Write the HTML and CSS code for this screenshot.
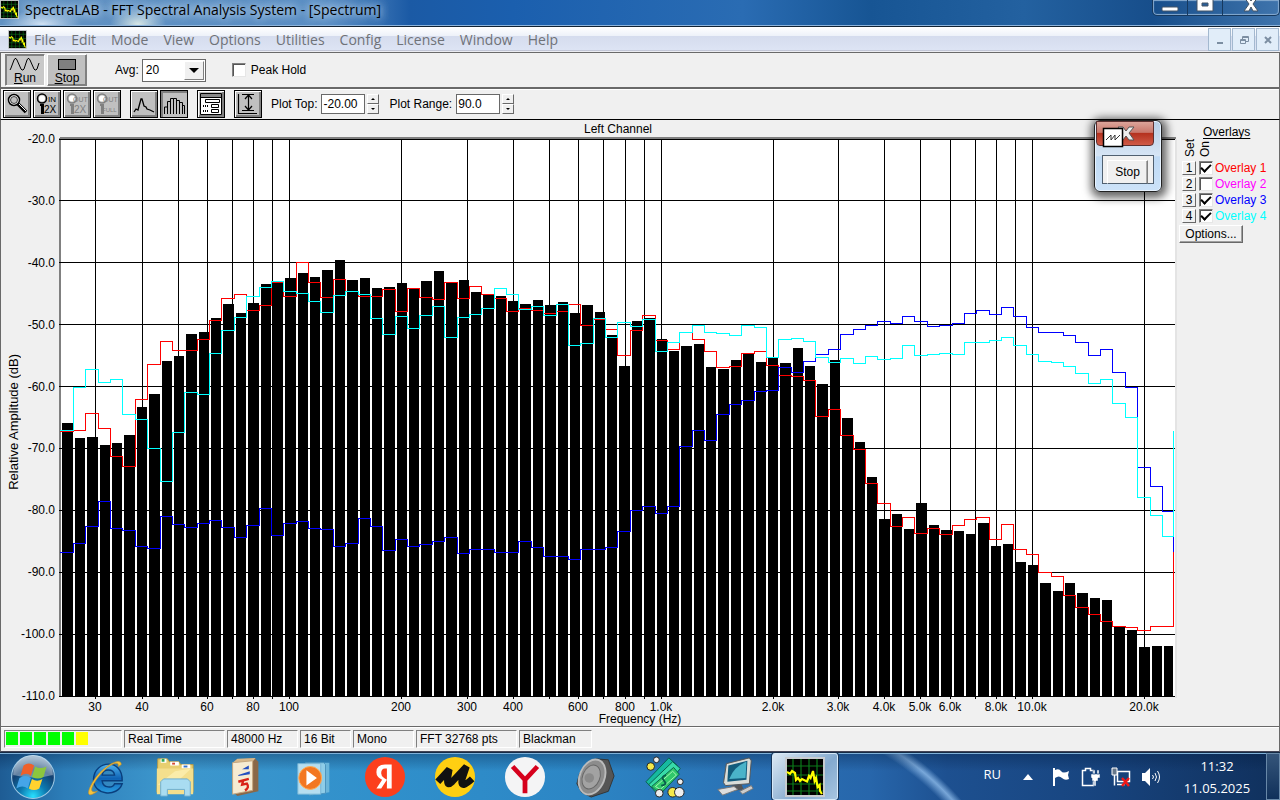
FILE: index.html
```html
<!DOCTYPE html>
<html lang="en">
<head>
<meta charset="utf-8">
<title>SpectraLAB - FFT Spectral Analysis System - [Spectrum]</title>
<link rel="stylesheet" href="styles.css">
</head>
<body>
<svg class="defs" aria-hidden="true">
  <symbol id="app" viewBox="0 0 20 20">
    <rect width="20" height="20" fill="#c8ccd0"/><rect x="1" y="1" width="18" height="18" fill="#000"/>
    <path d="M4 1v18M8 1v18M12 1v18M16 1v18M1 4.500h18M1 9h18M1 13.500h18M1 17h18" stroke="#0a7a1a" stroke-width=".6"/>
    <path d="M1 7.400l1.500 1L3.500 7 5 8l.5 3.500 1-1L7.500 12l1-1 2.500 1.200 1-2.700.8 1L14 7l.8 5 .7-1.500.8 4.500 1-1 .2 3 1 1.500" fill="none" stroke="#ff0" stroke-width="1.100"/>
  </symbol>
  <symbol id="key" viewBox="0 0 24 24">
    <circle cx="7" cy="6.500" r="4.500" fill="none" stroke="currentColor" stroke-width="1.500"/><circle cx="7" cy="6.500" r="3" fill="#fff"/><path d="M5 12h4v10H6v-8H5z" fill="currentColor"/>
  </symbol>
</svg>

<header class="titlebar">
  <svg class="app-icon"><use href="#app"/></svg>
  <h1>SpectraLAB - FFT Spectral Analysis System - [Spectrum]</h1>
  <div class="win-buttons">
    <button aria-label="Minimize"><svg width="20" height="15"><rect x="2" y="7" width="16" height="4" rx="1" fill="#fff" stroke="#456"/></svg></button>
    <button aria-label="Maximize"><svg width="20" height="15"><path d="M2-2h16v13H2zM7 3v3h6V3z" fill="#fff" fill-rule="evenodd" stroke="#456"/></svg></button>
    <button aria-label="Close"><svg width="20" height="15"><path d="M3-3h4l3 4 3-4h4l-5 7 5 7h-5l-2-4-2 4H3l5-7z" fill="#fff" stroke="#456"/></svg></button>
  </div>
</header>

<nav class="menubar">
  <svg class="menu-icon"><use href="#app"/></svg>
  <button>File</button><button>Edit</button><button>Mode</button><button>View</button><button>Options</button><button>Utilities</button><button>Config</button><button>License</button><button>Window</button><button>Help</button>
  <div class="mdi">
    <button aria-label="Minimize child"><svg width="12" height="12"><path d="M3 8h6v2H3z" fill="#7c8ea2"/></svg></button>
    <button aria-label="Restore child"><svg width="12" height="12"><path d="M4.500 5V2.500h6v5H8M2.500 5.500h5v4h-5zM4 3.500h6M2 6.500h6" fill="none" stroke="#7c8ea2"/></svg></button>
    <button aria-label="Close child"><svg width="12" height="12"><path d="M3 3l6 6M9 3L3 9" stroke="#7c8ea2" stroke-width="2"/></svg></button>
  </div>
</nav>

<section class="bar run-bar">
  <button class="big pressed"><svg width="32" height="14"><path d="M1 13L2 11 5 3 6 1.500h1L8 3l4 9 1 1h1l1-1 3-9 1-1.500h1L21 3l4 9 1 1h1l1-1 2-6" fill="none" stroke="#000"/></svg><span><u>R</u>un</span></button>
  <button class="big"><svg width="32" height="14"><rect x="7.500" y="2.500" width="17" height="10" fill="#808080" stroke="#000"/></svg><span><u>S</u>top</span></button>
  <label class="avg-label" for="avg">Avg:</label>
  <div class="select-box"><select id="avg"><option>20</option></select><i></i></div>
  <label class="peak"><input type="checkbox"> Peak Hold</label>
</section>

<section class="bar tool-bar">
  <button class="tool" aria-label="Zoom"><svg viewBox="0 0 24 24"><circle cx="9" cy="8" r="5.500" fill="#fff" stroke="#000" stroke-width="1.500"/><circle cx="9" cy="8" r="3.500" fill="#c0c0c0" stroke="#000" stroke-width=".7"/><path d="M13 12l8 8" stroke="#000" stroke-width="3.500"/><path d="M14 12l7 7" stroke="#fff" stroke-width="1"/></svg></button>
  <button class="tool" aria-label="Zoom in 2X"><svg viewBox="0 0 24 24"><use href="#key"/><text x="13" y="10" font-size="8">IN</text><text x="9" y="21" font-size="10">2X</text></svg></button>
  <button class="tool off" disabled aria-label="Zoom out 2X"><svg viewBox="0 0 24 24"><use href="#key"/><text x="8" y="10" font-size="7">OUT</text><text x="9" y="21" font-size="10">2X</text></svg></button>
  <button class="tool off" disabled aria-label="Zoom out full"><svg viewBox="0 0 24 24"><use href="#key"/><text x="8" y="10" font-size="7">OUT</text><text x="7" y="20" font-size="6">FULL</text></svg></button>
  <button class="tool gap" aria-label="Line plot"><svg viewBox="0 0 24 24"><path d="M2 20l2-3 2 1 3-11h1l2 7 2 1 1 2 3 1 4 2" fill="none" stroke="#000" stroke-width="1.300"/></svg></button>
  <button class="tool pressed" aria-label="Bar plot"><svg viewBox="0 0 24 24"><path d="M2.500 22v-7h3v7V9.500h3V22V6.500h3V22V6.500h3V22V8.500h3V22V10.500h3V22v-8.500h2V22" fill="none" stroke="#000"/></svg></button>
  <button class="tool gap" aria-label="Settings"><svg viewBox="0 0 24 24"><path d="M1.500 1.500h21v21h-21z" fill="#fff" stroke="#000"/><path d="M2 2h20v3H2z" fill="#888"/><path d="M2 5.500h20M6.500 7.500h14v3h-14zM12.500 12.500h7v3h-7zM12.500 17.500h7v3h-7z" fill="none" stroke="#000"/><path d="M4 14h6M4 19h6" stroke="#000" stroke-width="2" stroke-dasharray="1 1"/></svg></button>
  <button class="tool gap" aria-label="Autoscale"><svg viewBox="0 0 24 24"><path d="M2.500 2v19.500H21M6 2.500h12M6 18.500h12M12.500 3v15M9 7l3.500-4L16 7M9 14l3.500 4 3.500-4" fill="none" stroke="#000" stroke-width="1.200"/></svg></button>
  <label class="field first">Plot Top:<input type="text" value="-20.00"></label>
  <div class="spin"><button aria-label="Top up"></button><button class="down" aria-label="Top down"></button></div>
  <label class="field">Plot Range:<input type="text" value="90.0"></label>
  <div class="spin"><button aria-label="Range up"></button><button class="down" aria-label="Range down"></button></div>
</section>

<main class="work">
  <div class="axis-name"><span>Relative Amplitude (dB)</span></div>
  <div class="y-axis"><span>-20.0</span><span>-30.0</span><span>-40.0</span><span>-50.0</span><span>-60.0</span><span>-70.0</span><span>-80.0</span><span>-90.0</span><span>-100.0</span><span>-110.0</span></div>
  <div class="chart">
    <h2>Left Channel</h2>
    <svg id="plot" viewBox="59 137 1118 562" preserveAspectRatio="none" role="img" aria-label="Spectrum of the left channel"></svg>
    <div class="x-axis" id="xaxis"></div>
    <p class="x-name">Frequency (Hz)</p>
  </div>
  <aside class="overlays">
    <h3>Overlays</h3>
    <div class="heads"><span>Set</span><span>On</span></div>
    <div class="row"><button>1</button><label class="red"><input type="checkbox" checked>Overlay 1</label></div>
    <div class="row"><button>2</button><label class="magenta"><input type="checkbox">Overlay 2</label></div>
    <div class="row"><button>3</button><label class="blue"><input type="checkbox" checked>Overlay 3</label></div>
    <div class="row"><button>4</button><label class="cyan"><input type="checkbox" checked>Overlay 4</label></div>
    <button class="options">Options...</button>
  </aside>
  <div class="popup">
    <button class="popup-close" aria-label="Close"><svg width="56" height="26"><path d="M21 5h5l3 4 3-4h5l-5 6 5 7h-5l-3-4-3 4h-5l5-7z" fill="#eee" stroke="#555"/><rect x="6.500" y="6.500" width="19" height="18" fill="#fff" stroke="#000" stroke-width="1.500"/><path d="M9 18l5-5v5l4-5v5l5-5" fill="none" stroke="#333"/></svg></button>
    <div class="popup-body"><button>Stop</button></div>
  </div>
</main>

<footer class="status">
  <div class="cell level"><i></i><i></i><i></i><i></i><i></i><i class="warn"></i></div>
  <div class="cell mode">Real Time</div><div class="cell rate">48000 Hz</div><div class="cell bits">16 Bit</div><div class="cell chan">Mono</div><div class="cell fft">FFT 32768 pts</div><div class="cell window">Blackman</div>
</footer>

<div class="taskbar">
  <div class="tasks">
  <button aria-label="Start" class="start"><svg viewBox="0 0 44 44">
    <defs><radialGradient id="orb" cx=".5" cy=".95" r=".9"><stop offset="0" stop-color="#27e0ff"/><stop offset=".35" stop-color="#0d79b0"/><stop offset=".7" stop-color="#123f70"/><stop offset="1" stop-color="#7c9dbb"/></radialGradient></defs>
    <circle cx="22" cy="22" r="20.500" fill="url(#orb)" stroke="#9ec8e4"/><path d="M3 20a19 19 0 0 1 38 0q-18 5-38 0z" fill="#fff" opacity=".35"/>
    <path d="M13 11q5-4 10 0l-3 10q-4-4-10 0z" fill="#f0602a"/><path d="M24 12q5 3 11 0l-3 10q-5 3-11 0z" fill="#8cc63e"/><path d="M9 23q6-4 11 0l-3 10q-5-4-11 0z" fill="#45a5e8"/><path d="M21 24q5 3 10 0l-3 9q-5 3-10 0z" fill="#ffd22e"/></svg></button>
  <button aria-label="Internet Explorer"><svg viewBox="0 0 44 44">
    <defs><linearGradient id="ie" x2="0" y2="1"><stop offset="0" stop-color="#4fb4f0"/><stop offset=".5" stop-color="#0f62b4"/><stop offset="1" stop-color="#2a9de0"/></linearGradient></defs>
    <path d="M40 26H19c1 8 11 8 13 3h8c-5 15-31 12-30-5C11 4 41 2 40 26zM19 20h13c-1-7-12-7-13 0z" fill="url(#ie)" stroke="#0a3f7d" stroke-width="1.500"/><path d="M39 9c0-9-20 2-29 17C2 39 3 45 14 37 4 40 8 31 15 22 24 10 37 3 36 11z" fill="#f5c33b" stroke="#c8922a" stroke-width=".7"/></svg></button>
  <button aria-label="Explorer"><svg viewBox="0 0 44 44"><path d="M4 3h10l2 3h10l2 3h13v29H3z" fill="#e8cf70" stroke="#b79a45"/><path d="M7 3h6v4H7zM17 6h9v4h-9zM29 9h9v4h-9z" fill="#fff"/><path d="M8 3h3v3H8z" fill="#32a852"/><path d="M19 7h3v2h-3z" fill="#d64b35"/><path d="M31 10h4v2h-4z" fill="#3374cd"/><path d="M3 13h38v27H3z" fill="#f4df8d"/><path d="M4 30l18-14 17-3-20 19z" fill="#fff5bc" opacity=".6"/><path d="M7 42V27l3-3h25l3 3v15h-6v-7H14v7z" fill="#a9dcf1" stroke="#6cadd0"/></svg></button>
  <button aria-label="Mahjong"><svg viewBox="0 0 44 44"><path d="M12 4l20-2 4 4v31l-22 5-4-4z" fill="#8a6848"/><path d="M9 7l5-4 19-1-3 4z" fill="#d8b98c"/><path d="M9 7l21-2v31L9 40z" fill="#f6ebd2" stroke="#c4a67f"/><path d="M19 14l7-4v4zM15 20l12-4v3l-12 2z" fill="#234fc0"/><path d="M15 27l11-3M20 26l-1 4 5-1q3 4-2 7" fill="none" stroke="#d82318" stroke-width="2.500"/></svg></button>
  <button aria-label="Media Player" class="media"><svg viewBox="0 0 44 44"><path d="M16 7h21v31l-18 3z" fill="#6ab5da"/><path d="M12 7h19l2 2v30l-17 2z" fill="#8fcde8" stroke="#4a93bd"/><path d="M4 8h24v32H4z" fill="#b6def0" stroke="#76b4d5"/><circle cx="17" cy="23" r="12" fill="#f37721" stroke="#ffae57"/><path d="M13 15l11 8-11 8z" fill="#fff"/></svg></button>
  <button aria-label="Yandex"><svg viewBox="0 0 44 44"><circle cx="22" cy="22" r="21" fill="#fc3f1d"/><path d="M29 34h-5V13h-2q-4 0-4 5 0 3 3 5l3 2-6 9h-5l6-9q-6-3-6-8 0-8 9-8h7z" fill="#fff"/></svg></button>
  <button aria-label="Market"><svg viewBox="0 0 44 44"><circle cx="22" cy="22" r="21" fill="#ffcf12"/><path d="M4 27L16 14l-2 12q0 6 5 1L34 11l-5 15q-1 9 11-2" fill="none" stroke="#111" stroke-width="7" stroke-linejoin="bevel"/></svg></button>
  <button aria-label="Yandex Browser"><svg viewBox="0 0 44 44"><circle cx="22" cy="22" r="21" fill="#f4f4f5"/><path d="M9 11l13 14L35 11M22 24v15" fill="none" stroke="#d6001c" stroke-width="5"/></svg></button>
  <button aria-label="Speaker"><svg viewBox="0 0 44 44"><path d="M23 3l13 1 6 17-6 16-18 6-10-5-5-9 3-11z" fill="#555" stroke="#333"/><ellipse cx="19" cy="22" rx="13" ry="19" fill="#8c8c8c" stroke="#bbb" stroke-width="2" transform="rotate(22 19 22)"/><ellipse cx="18" cy="22" rx="9" ry="13" fill="#a2a2a2" stroke="#666" transform="rotate(22 18 22)"/><circle cx="16" cy="23" r="5" fill="#8a8a8a"/></svg></button>
  <button aria-label="Money"><svg viewBox="0 0 44 44"><g stroke="#075d4b" fill="#16b9a0"><path d="M2 27L26 2l9 8-21 29z"/><path d="M5 30L30 6l8 7-22 29z" fill="#38dba8"/><path d="M8 32L31 12l6 7-20 21z" fill="#30c86a"/></g><path d="M12 32l18-16 4 4-17 15z" fill="none" stroke="#a9f7b7"/><path d="M23 20q-6 2-2 6t-3 5" fill="none" stroke="#075d4b" stroke-width="2"/><g stroke="#222" fill="#eee"><circle cx="13" cy="4" r="3"/><circle cx="38" cy="27" r="3"/><circle cx="16" cy="39" r="4"/><circle cx="30" cy="38" r="5" fill="#f5e94b"/><circle cx="37" cy="38" r="5"/><circle cx="7" cy="11" r="4" fill="#f5e94b"/></g></svg></button>
  <button aria-label="Computer"><svg viewBox="0 0 44 44"><path d="M13 8l24-6 2 3-2 24-25 2-2-3z" fill="#d9ddd9" stroke="#555"/><path d="M15 10l20-5-1 20-20 2z" fill="#125b7c"/><path d="M16 24q5-13 18-18l-1 17z" fill="#4ab3c9"/><path d="M19 31l10-1 2 5-14 2z" fill="#555"/><path d="M4 35l17-3 4 3-16 6z" fill="#ddd" stroke="#777"/><path d="M27 37l12-6 2 3-11 6z" fill="#ccc" stroke="#777"/></svg></button>
  <button class="active" aria-label="SpectraLAB"><svg viewBox="0 0 20 20"><use href="#app"/></svg></button>
  </div>
  <div class="tray">
    <span>RU</span>
    <svg width="10" height="6"><path d="M0 6l5-6 5 6z" fill="#fff"/></svg>
    <svg width="20" height="20"><path d="M3 1v18" stroke="#fff" stroke-width="2"/><path d="M4 3q4-2 6 1t8 0l-1 4 1 4q-4 2-7-1t-7 0z" fill="#fff"/></svg>
    <svg width="20" height="20"><path d="M1.500 3.500h3v-2h5v2h3v15h-11z" fill="none" stroke="#fff" stroke-width="1.500"/><path d="M10 7h9v4h-2v3h-2v5h-2v-5h-2v-3h-1zM12 3h2v4h-2zM16 3h2v4h-2z" fill="#fff" stroke="#1c4a82" stroke-width=".5"/></svg>
    <svg width="20" height="20"><path d="M6.500 4.500h12v10h-12zM6 17.500h8M3.500 8v10.500" fill="none" stroke="#fff" stroke-width="1.500"/><path d="M1 1h5v7H1z" fill="#68798c" stroke="#fff"/><path d="M11 11l7 8M18 11l-7 8" stroke="#f01818" stroke-width="2.500"/></svg>
    <svg width="20" height="20"><path d="M1 6h3l5-5v18l-5-5H1z" fill="#fff"/><path d="M11.500 8q2 2 0 4M14 6q3 4 0 8M16.500 4q4 6 0 12" fill="none" stroke="#fff"/></svg>
    <div class="clock"><time>11:32</time><time>11.05.2025</time></div>
    <button class="desktop" aria-label="Show desktop"></button>
  </div>
</div>
<script src="script.js"></script>
</body>
</html>
```
FILE: styles.css
```css
* { box-sizing: border-box; }
body {
  margin: 0; min-height: 100vh; display: flex; flex-direction: column;
  background: #f0f0f0; color: #000;
  font: 12px/14px "Liberation Sans", Arial, sans-serif;
}
button { font: inherit; color: inherit; padding: 0; margin: 0; border: 0; background: none; }
h1, h2, h3, p { margin: 0; font-weight: normal; }
svg { display: block; flex: none; }
.defs { position: absolute; width: 0; height: 0; }

.titlebar {
  height: 27px; display: flex; align-items: flex-start; gap: 6px; overflow: hidden;
  border-bottom: 1px solid #123;
  background:
    radial-gradient(ellipse 40px 14px at 42px 24px, rgba(235,245,255,.8), transparent),
    radial-gradient(ellipse 28px 16px at 138px 24px, rgba(235,245,235,.85), transparent),
    linear-gradient(90deg, #6292c2 0, #5a8ec4 26%, #1b5aa5 32%, #1b5fae 40%, #2a6cb3 58%, #175594 68%, #2361a0 80%, #174e8b 90%, #3f74ac 100%);
  box-shadow: inset 0 -1px #8db4dc;
}
.app-icon { width: 19px; height: 19px; }
.titlebar h1 { font: 14px/20px "Open Sans", sans-serif; text-shadow: 0 0 8px #dcebfa, 0 0 8px #b8d4ee; white-space: nowrap; }
.win-buttons { margin-left: auto; display: flex; height: 16px; border: 1px solid #16395f; border-top: 0; border-radius: 0 0 5px 5px; box-shadow: inset 0 0 1px 1px #89acd0; }
.win-buttons button { width: 35px; display: flex; justify-content: center; border-right: 1px solid #16395f; }
.win-buttons button:last-child { width: 56px; border: 0; }

.menubar {
  height: 26px; display: flex; align-items: center; padding-left: 8px;
  background: linear-gradient(#fff 0, #edf1f9 36%, #d5dcee 38%, #dde4f4 92%, #b8bdd0 93%, #fff 100%);
  border-bottom: 1px solid #696969; color: #6f7278;
  font: 14px/22px "Open Sans", sans-serif;
}
.menu-icon { width: 19px; height: 19px; margin-right: 7px; }
.menubar > button { margin-right: 15px; }
.mdi { margin-left: auto; display: flex; gap: 1px; padding-right: 1px; }
.mdi button { width: 23px; height: 23px; background: #e1edf9; border: 1px solid #a3b8cf; display: grid; place-items: center; }

.bar { display: flex; align-items: center; border: 1px solid #696969; border-width: 0 1px 0 1px; }
.run-bar { height: 36px; padding: 0 0 0 4px; border-bottom: 2px solid #696969; }
.big {
  width: 40px; height: 32px; margin-right: 2px; background: #c0c0c0; padding-top: 2px;
  border: 1px solid; border-color: #fff #808080 #808080 #fff; box-shadow: inset -1px -1px #808080;
  display: flex; flex-direction: column; align-items: center;
}
.big.pressed { border-color: #808080 #fff #fff #808080; background: #c8c8c8; box-shadow: inset 1px 1px #808080; }
.avg-label { margin: 0 3px 0 26px; }
.select-box { position: relative; width: 64px; height: 23px; }
.select-box select { appearance: none; width: 100%; height: 100%; font: inherit; padding: 0 3px; background: #fff; border: 1px solid #696969; border-radius: 0; color: #000; }
.select-box i {
  position: absolute; top: 2px; right: 2px; bottom: 2px; width: 20px; pointer-events: none; background: #f0f0f0;
  border: 1px solid; border-color: #fff #808080 #808080 #fff; display: grid; place-items: center;
}
.select-box i::after { content: ""; border: 5px solid transparent; border-top-color: #000; border-bottom: 0; }
.peak { display: flex; align-items: center; gap: 5px; margin-left: 26px; }
input[type=checkbox] {
  appearance: none; width: 14px; height: 14px; margin: 0; background: #fff; flex: none;
  border: 1px solid; border-color: #808080 #e6e6e6 #e6e6e6 #808080; box-shadow: inset 1px 1px #555; display: grid; place-items: center;
}
input[type=checkbox]:checked::after { content: ""; width: 8px; height: 4px; border: 2px solid #000; border-width: 0 0 2px 2px; transform: rotate(-45deg); margin-bottom: 3px; }

.tool-bar { height: 31px; border-bottom: 1px solid #000; padding: 1px 0 1px 2px; box-shadow: inset 0 1px #fff; }
.tool {
  width: 28px; height: 28px; margin-right: 2px; background: #c0c0c0; padding: 0 1px;
  border: 1px solid #000; box-shadow: inset 1px 1px #fff, inset -2px -2px #808080;
}
.tool svg { width: 24px; height: 24px; font-family: "Liberation Sans", Arial, sans-serif; }
.tool.gap { margin-left: 7px; }
.tool.pressed { box-shadow: inset 2px 2px #808080; }
.tool.off { color: #808080; }
.tool.off text { fill: #808080; }
.field { display: flex; align-items: center; gap: 4px; margin-left: 10px; }
.field.first { margin-left: 7px; }
.field input { width: 44px; height: 20px; padding: 0 1px; border: 1px solid #696969; font: inherit; color: #000; background: #fff; }
.spin { display: flex; flex-direction: column; margin-left: 2px; }
.spin button { width: 12px; height: 10px; border: 1px solid; border-color: #fff #696969 #696969 #fff; display: grid; place-items: center; }
.spin button::after { content: ""; border: 2px solid transparent; border-bottom-color: #000; border-top: 0; }
.spin .down::after { border: 2px solid transparent; border-top-color: #000; border-bottom: 0; }

.work { flex: 1; position: relative; display: flex; border: 1px solid #696969; border-width: 0 1px; }
.axis-name { width: 26px; padding-top: 17px; padding-bottom: 19px; display: grid; place-items: center; font-size: 13px; }
.axis-name span { writing-mode: vertical-rl; transform: rotate(180deg); white-space: nowrap; }
.y-axis { width: 32px; padding: 12px 4px 23px 0; display: flex; flex-direction: column; justify-content: space-between; align-items: flex-end; }
.chart { flex: 1; display: flex; flex-direction: column; min-width: 0; }
.chart h2 { height: 17px; font: inherit; line-height: 18px; text-align: center; }
.chart > svg { width: 100%; height: 0; flex: 1; }
.x-axis { position: relative; height: 14px; }
.x-axis span { position: absolute; width: 40px; margin-left: -20px; text-align: center; top: 1px; }
.x-name { text-align: center; height: 13px; line-height: 13px; padding-left: 44px; }

.overlays { width: 102px; padding: 5px 0 0 2px; display: flex; flex-direction: column; align-items: flex-start; }
.overlays h3 { font: inherit; text-decoration: underline; text-underline-offset: 2px; margin-left: 24px; }
.heads { display: flex; height: 20px; align-items: flex-end; gap: 1px; padding-left: 4px; padding-bottom: 2px; margin-bottom: 1px; }
.heads span { writing-mode: vertical-rl; transform: rotate(180deg); width: 14px; }
.row { display: flex; height: 16px; align-items: center; padding-left: 3px; }
.row button { width: 14px; height: 14px; line-height: 11px; border: 1px solid; border-color: #fff #696969 #696969 #fff; margin-right: 3px; }
.row label { display: flex; align-items: center; gap: 2px; white-space: nowrap; }
.red { color: #f00; } .magenta { color: #f0f; } .blue { color: #00f; } .cyan { color: #0ff; }
.options { width: 64px; height: 18px; margin-top: 1px; border: 1px solid; border-color: #fff #696969 #696969 #fff; box-shadow: inset -1px -1px #a0a0a0; }

.popup {
  position: absolute; top: 0; right: 117px; width: 68px; height: 72px; padding: 0 8px 7px 7px;
  display: flex; flex-direction: column; gap: 9px; border: 1px solid #222; border-radius: 6px;
  background: linear-gradient(#b9cfe6 0, #d6e5f5 50%, #bfdaf5 51%, #cce2f8 100%);
  box-shadow: inset 0 0 0 1px #e8f3ff, 1px 2px 8px 4px rgba(0,0,0,.6);
}
.popup-close { width: 58px; height: 25px; margin-left: -6px; border: 1px solid #5d3030; border-radius: 0 0 4px 4px; background: linear-gradient(#dba49a 0, #c9776b 45%, #b5321f 50%, #cf5a47 100%); }
.popup-body { width: 52px; height: 29px; flex: none; border: 1px solid #506070; background: #f0f0f0; padding: 4px 5px 0 4px; }
.popup-body button { width: 100%; height: 24px; border: 1px solid; border-color: #fff #808080 transparent #fff; box-shadow: inset -1px 0 #aaa; }

.status { height: 26px; display: flex; gap: 2px; padding: 3px 0 0 3px; border: 1px solid #696969; border-bottom-color: #445; box-shadow: inset 0 1px #fff; }
.cell { height: 18px; padding: 1px 3px; border: 1px solid; border-color: #808080 #fff #fff #808080; white-space: nowrap; }
.level { width: 118px; display: flex; gap: 2px; padding: 1px; }
.level i { width: 12px; height: 13px; background: #0f0; }
.level .warn { background: #ff0; }
.mode { width: 101px; } .rate { width: 71px; } .bits { width: 51px; } .chan { width: 61px; } .fft { width: 101px; } .window { width: 73px; }

.taskbar {
  height: 48px; display: flex; justify-content: space-between; color: #fff; overflow: hidden;
  border-top: 1px solid #152b45;
  box-shadow: inset 0 1px #7fb0d8;
  background:
    linear-gradient(rgba(0,25,60,.35), transparent 18px),
    radial-gradient(circle 294px at -130px 240px, transparent 278px, rgba(150,195,240,.75) 287px, transparent 294px) right 290px top / 120px 48px no-repeat,
    linear-gradient(90deg, #1e5c94 0, #2c7db8 5%, #3d97cd 13%, #3090cb 30%, #2c86c5 45%, #2a72b5 58%, #2766ab 68%, #1d5090 74%, #184580 85%, #10305c 100%);
}
.tasks { display: flex; }
.tasks button { width: 70px; display: grid; place-items: center; }
.tasks svg { width: 42px; height: 42px; }
.tasks .start svg { width: 46px; height: 46px; }
.tasks .start { width: 66px; margin-right: 4px; }
.tasks .active { width: 66px; margin-left: 2px; border: 1px solid #d7e9f8; border-radius: 3px; background: linear-gradient(135deg, #dbe8f3, #84aacf 60%, #a7c5e0); box-shadow: 0 0 0 1px #17365a; }
.tasks .active svg { width: 40px; height: 40px; }
.tray { display: flex; align-items: center; font: 13px/22px "Open Sans", sans-serif; }
.tray > span { margin-right: 22px; margin-top: -6px; }
.tray > svg { margin-right: 11px; }
.tray > svg + svg { margin-right: 10px; }
.tray > span + svg { margin-right: 18px; }
.clock { display: flex; flex-direction: column; align-items: center; width: 72px; margin: 0 13px 0 10px; }
.desktop { width: 14px; align-self: stretch; border: 1px solid #6888a8 !important; background: linear-gradient(#35557a, #10305a); }
```
FILE: script.js
```js
// Levels are plot heights: 139 is -20 dB, 696 is -110 dB, one entry for each band.
const live = [423,438,437,445,443,435,407,394,361,356,334,332,318,304,313,303,284,282,278,273,277,270,260,280,278,288,287,283,288,281,271,282,280,292,294,296,301,304,300,305,302,313,305,312,335,366,321,318,339,351,346,344,367,369,360,353,362,358,363,348,366,384,360,418,442,477,519,514,529,503,525,530,531,534,523,546,544,562,565,583,591,583,593,598,600,627,630,647,646,646];
const overlays = [
  { color: '#f00', end: 551, data: [431,430,413,428,456,466,399,364,341,350,350,339,320,298,294,310,305,282,296,262,282,297,279,291,296,296,289,311,288,297,299,282,298,286,294,298,311,308,310,313,311,304,325,319,329,355,330,315,340,349,332,339,351,367,366,353,351,365,375,376,380,416,409,435,449,483,503,526,517,533,528,534,525,519,517,539,524,549,554,572,576,595,607,614,621,626,627,630,626,626] },
  { color: '#00f', end: 551, data: [552,543,526,501,528,530,546,548,516,524,527,523,520,527,537,525,508,535,523,521,528,529,546,543,518,526,550,539,546,544,541,537,553,549,549,552,552,541,547,556,556,559,549,549,547,531,510,506,513,506,446,430,440,414,404,400,391,390,367,372,361,354,349,334,329,325,321,323,316,321,326,325,323,313,310,314,307,316,327,332,332,335,342,355,349,372,387,467,486,511] },
  { color: '#0ff', end: 431, data: [430,387,369,382,379,414,419,448,481,432,392,394,353,330,317,296,287,281,291,293,301,312,295,291,294,318,334,316,328,315,306,337,317,314,308,288,294,309,306,315,304,345,343,318,337,322,326,319,351,342,332,325,332,333,335,325,327,357,339,338,341,357,362,358,363,356,359,358,345,355,354,353,354,342,342,340,337,345,354,361,362,366,373,383,379,403,417,497,515,536] }
];
const verticals = [95,142,178,207,232,253,272,289,401,467,513,549,578,603,625,644,661,773,838,884,920,950,975,996,1015,1032,1144];
const labels = { 95:'30',142:'40',207:'60',253:'80',289:'100',401:'200',467:'300',513:'400',578:'600',625:'800',661:'1.0k',773:'2.0k',838:'3.0k',884:'4.0k',920:'5.0k',950:'6.0k',996:'8.0k',1032:'10.0k',1144:'20.0k' };

const edge = k => k === 0 ? 60 : k === 90 ? 1173 : Math.round(72.9 + 12.375 * (k - 1));
const rect = (x, y, w, h, fill) => `<rect x="${x}" y="${y}" width="${w}" height="${h}" fill="${fill}"/>`;

let out = rect(61, 139, 1114, 557, '#fff') + rect(60, 137, 1116, 2, '#808080') + rect(59, 138, 2, 559, '#808080') + rect(1175, 139, 2, 559, '#e4e4e4');
for (const y of [139, 200, 262, 324, 386, 448, 510, 572, 634, 696]) out += rect(59, y, 1116, 1, '#000');
for (const x of verticals) out += rect(x, 139, 1, 560, '#000');
live.forEach((y, i) => { out += rect(edge(i) + 2, y, edge(i + 1) - edge(i) - 2, 697 - y, '#000'); });
for (const o of overlays) {
  let d = `M60.5 ${o.data[0] + 0.5}`;
  o.data.forEach((y, i) => { d += `V${y + 0.5}H${edge(i + 1) + 0.5}`; });
  d += `V${o.end + 0.5}`;
  out += `<path d="${d}" fill="none" stroke="${o.color}" stroke-linecap="square"/>`;
}
const plot = document.getElementById('plot');
plot.setAttribute('shape-rendering', 'crispEdges');
plot.innerHTML = out;
document.getElementById('xaxis').innerHTML = Object.entries(labels)
  .map(([x, t]) => `<span style="left:${(x - 59) / 11.18}%">${t}</span>`).join('');
```
